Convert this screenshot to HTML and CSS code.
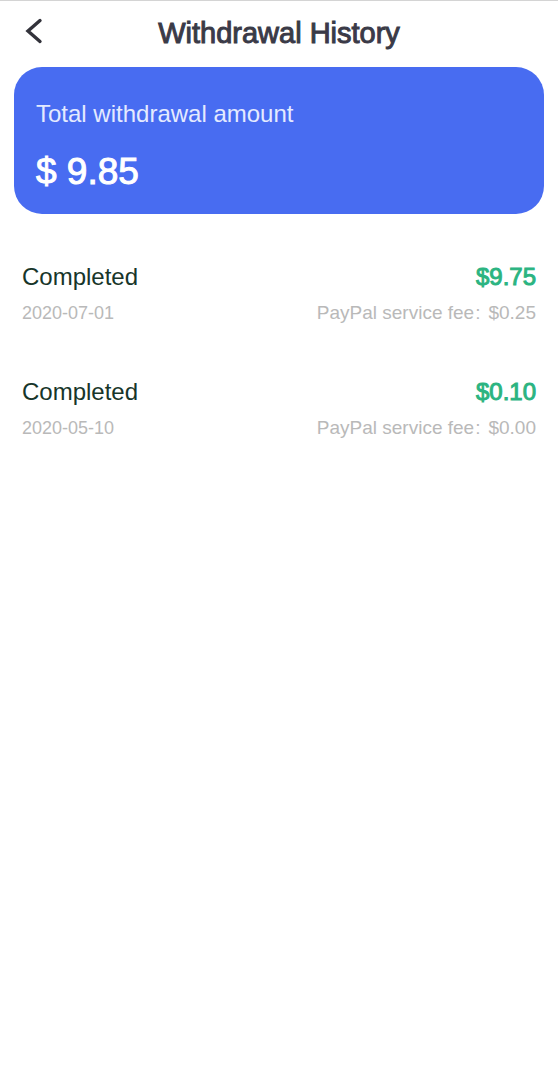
FILE: index.html
```html
<!DOCTYPE html>
<html lang="en">
<head>
    <meta charset="UTF-8">
    <meta name="viewport" content="width=device-width, initial-scale=1.0">
    <title>Withdrawal History</title>
    <link rel="stylesheet" href="styles.css">
</head>
<body>
    <header class="topbar">
        <button class="back" type="button" aria-label="Back">
            <svg width="18" height="26" viewBox="0 0 18 26" fill="none" stroke="#33333b" stroke-width="3.4" stroke-linecap="round">
                <path d="M15 2.5 L3 13 L15 23.5"/>
            </svg>
        </button>
        <h1 class="title">Withdrawal History</h1>
    </header>

    <main>
        <section class="summary">
            <p class="summary-label">Total withdrawal amount</p>
            <p class="summary-amount">$ 9.85</p>
        </section>

        <ul class="history">
            <li class="entry">
                <div class="row">
                    <span class="status">Completed</span>
                    <span class="amount">$9.75</span>
                </div>
                <div class="row details">
                    <time class="date" datetime="2020-07-01">2020-07-01</time>
                    <span class="fee">PayPal service fee<span class="colon">:</span>$0.25</span>
                </div>
            </li>
            <li class="entry">
                <div class="row">
                    <span class="status">Completed</span>
                    <span class="amount">$0.10</span>
                </div>
                <div class="row details">
                    <time class="date" datetime="2020-05-10">2020-05-10</time>
                    <span class="fee">PayPal service fee<span class="colon">:</span>$0.00</span>
                </div>
            </li>
        </ul>
    </main>
</body>
</html>
```

FILE: styles.css
```css
body {
    margin: 0;
    background-color: #ffffff;
    border-top: 1px solid #d4d4d4;
    font-family: "Liberation Sans", Arial, sans-serif;
}

/* Header: the empty right column keeps the title centred */
.topbar {
    display: grid;
    grid-template-columns: 68px 1fr 68px;
    align-items: center;
    height: 64px;
}

.back {
    display: flex;
    justify-content: center;
    padding: 0 0 4px;
    border: 0;
    background: none;
    cursor: pointer;
}

.title {
    margin: 0;
    color: #3a3a47;
    font-size: 29px;
    font-weight: normal;
    -webkit-text-stroke: 1px #3a3a47;
    text-align: center;
}

/* Blue total card */
.summary {
    margin: 2px 14px 0;
    padding: 31px 22px 20px;
    border-radius: 28px;
    background-color: #486cf1;
    color: #ffffff;
}

.summary-label {
    margin: 0;
    color: #e4eaff;
    font-size: 24px;
    line-height: 32px;
}

.summary-amount {
    margin: 20px 0 0;
    font-size: 37px;
    line-height: 44px;
    -webkit-text-stroke: 1px #ffffff;
}

/* List of withdrawals */
.history {
    display: flex;
    flex-direction: column;
    gap: 43px;
    margin: 45px 22px 0;
    padding: 0;
    list-style: none;
}

.row {
    display: flex;
    justify-content: space-between;
    align-items: center;
    line-height: 36px;
}

.status {
    color: #17352a;
    font-size: 24px;
}

.amount {
    color: #2bb481;
    font-size: 24px;
    -webkit-text-stroke: 1px #2bb481;
}

.details {
    color: #b9b9b9;
}

.date {
    font-size: 18px;
}

.fee {
    font-size: 19px;
}

.colon {
    margin: 0 8px 0 1px;
}
```
